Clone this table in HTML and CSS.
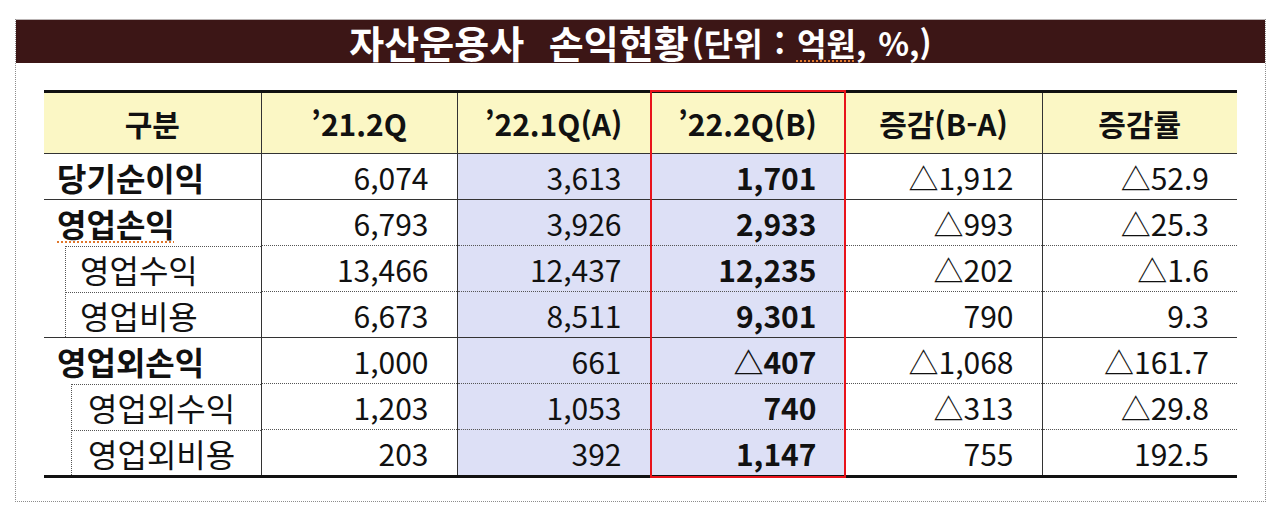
FILE: index.html
```html
<!DOCTYPE html>
<html lang="ko">
<head>
<meta charset="utf-8">
<title>자산운용사 손익현황</title>
<link rel="stylesheet" href="styles.css">
</head>
<body>
<div class="frame">
  <div class="titlebar">
    <span class="t-main">자산운용사 손익현황</span><span class="t-unit">(단위 : <span class="squig">억원</span>, %,)</span>
  </div>
  <div class="tablewrap">
    <table class="pl">
      <colgroup>
        <col class="c1"><col class="c2"><col class="c3"><col class="c4"><col class="c5"><col class="c6">
      </colgroup>
      <thead>
        <tr><th>구분</th><th>’21.2Q</th><th>’22.1Q(A)</th><th>’22.2Q(B)</th><th>증감(B-A)</th><th>증감률</th></tr>
      </thead>
      <tbody>
        <tr class="solid"><td class="lbl b">당기순이익</td><td>6,074</td><td class="hl">3,613</td><td class="hl b">1,701</td><td>△1,912</td><td>△52.9</td></tr>
        <tr class="solid"><td class="lbl b"><span class="squig">영업손익</span></td><td>6,793</td><td class="hl">3,926</td><td class="hl b">2,933</td><td>△993</td><td>△25.3</td></tr>
        <tr class="dot"><td class="sub"><div class="subin">영업수익</div></td><td>13,466</td><td class="hl">12,437</td><td class="hl b">12,235</td><td>△202</td><td>△1.6</td></tr>
        <tr class="dot"><td class="sub"><div class="subin">영업비용</div></td><td>6,673</td><td class="hl">8,511</td><td class="hl b">9,301</td><td>790</td><td>9.3</td></tr>
        <tr class="solid"><td class="lbl b">영업외손익</td><td>1,000</td><td class="hl">661</td><td class="hl b">△407</td><td>△1,068</td><td>△161.7</td></tr>
        <tr class="dot"><td class="sub"><div class="subin deep">영업외수익</div></td><td>1,203</td><td class="hl">1,053</td><td class="hl b">740</td><td>△313</td><td>△29.8</td></tr>
        <tr class="dot last"><td class="sub"><div class="subin deep">영업외비용</div></td><td>203</td><td class="hl">392</td><td class="hl b">1,147</td><td>755</td><td>192.5</td></tr>
      </tbody>
    </table>
    <div class="redbox"></div>
  </div>
</div>
</body>
</html>
```

FILE: styles.css
```css
body {
  margin: 0;
  background: #ffffff;
  font-family: "Noto Sans CJK KR", "Noto Sans", sans-serif;
  color: #111111;
}

.frame {
  margin: 19px 0 0 15px;
  width: 1251px;
  height: 483px;
  box-sizing: border-box;
  border: 1px dotted #8c8c8c;
  border-top: none;
}

.titlebar {
  height: 44px;
  box-sizing: border-box;
  border-top: 1px solid #b9b3b3;
  background: #3c1616;
  color: #ffffff;
  font-weight: 700;
  display: flex;
  align-items: center;
  justify-content: center;
  line-height: 1;
}

.t-main {
  font-size: 38px;
  word-spacing: 14px;
}

.t-unit {
  font-size: 32px;
  margin-left: 3px;
  word-spacing: 3px;
}

.squig {
  text-decoration: underline dotted #e0782c;
  text-decoration-thickness: 2px;
  text-underline-offset: 5px;
}

.tablewrap {
  position: relative;
  margin: 27px 0 0 28px;
  width: 1193px;
}

.pl {
  border-collapse: collapse;
  table-layout: fixed;
  width: 1193px;
}

.c1 { width: 217px; }
.c2 { width: 196px; }
.c3 { width: 193px; }
.c4 { width: 195px; }
.c5 { width: 197px; }
.c6 { width: 195px; }

.pl th {
  background: #fbf7c5;
  height: 60px;
  padding: 0;
  font-size: 30px;
  font-weight: 700;
  line-height: 1;
  text-align: center;
  border-top: 3px solid #111111;
  border-left: 1px solid #333333;
  border-bottom: 1px solid #333333;
}

.pl th:first-child {
  border-left: none;
}

.pl td {
  height: 45px;
  padding: 0 28px 0 0;
  font-size: 30px;
  line-height: 1;
  text-align: right;
  border-left: 1px solid #333333;
  white-space: nowrap;
}

.pl td:first-child {
  border-left: none;
  text-align: left;
  padding-left: 13px;
  font-size: 32px;
}

.pl td.hl {
  background: #dde0f6;
}

.b {
  font-weight: 700;
}

.pl tr.solid td {
  border-top: 1px solid #333333;
}

.pl tr.dot td {
  border-top: 1px dotted #555555;
}

.pl tr.dot td.sub {
  border-top: none;
  padding: 0;
}

.subin {
  margin-left: 21px;
  height: 45px;
  box-sizing: border-box;
  border-left: 1px dotted #555555;
  border-top: 1px dotted #555555;
  display: flex;
  align-items: center;
  padding-left: 14px;
  font-weight: 400;
}

.subin.deep {
  margin-left: 27px;
  padding-left: 16px;
}

.pl tr.last td {
  border-bottom: 3px solid #111111;
}

.redbox {
  position: absolute;
  left: 606px;
  top: 0;
  width: 196px;
  bottom: 0;
  box-sizing: border-box;
  border: 2px solid #e8131b;
  pointer-events: none;
}
```
